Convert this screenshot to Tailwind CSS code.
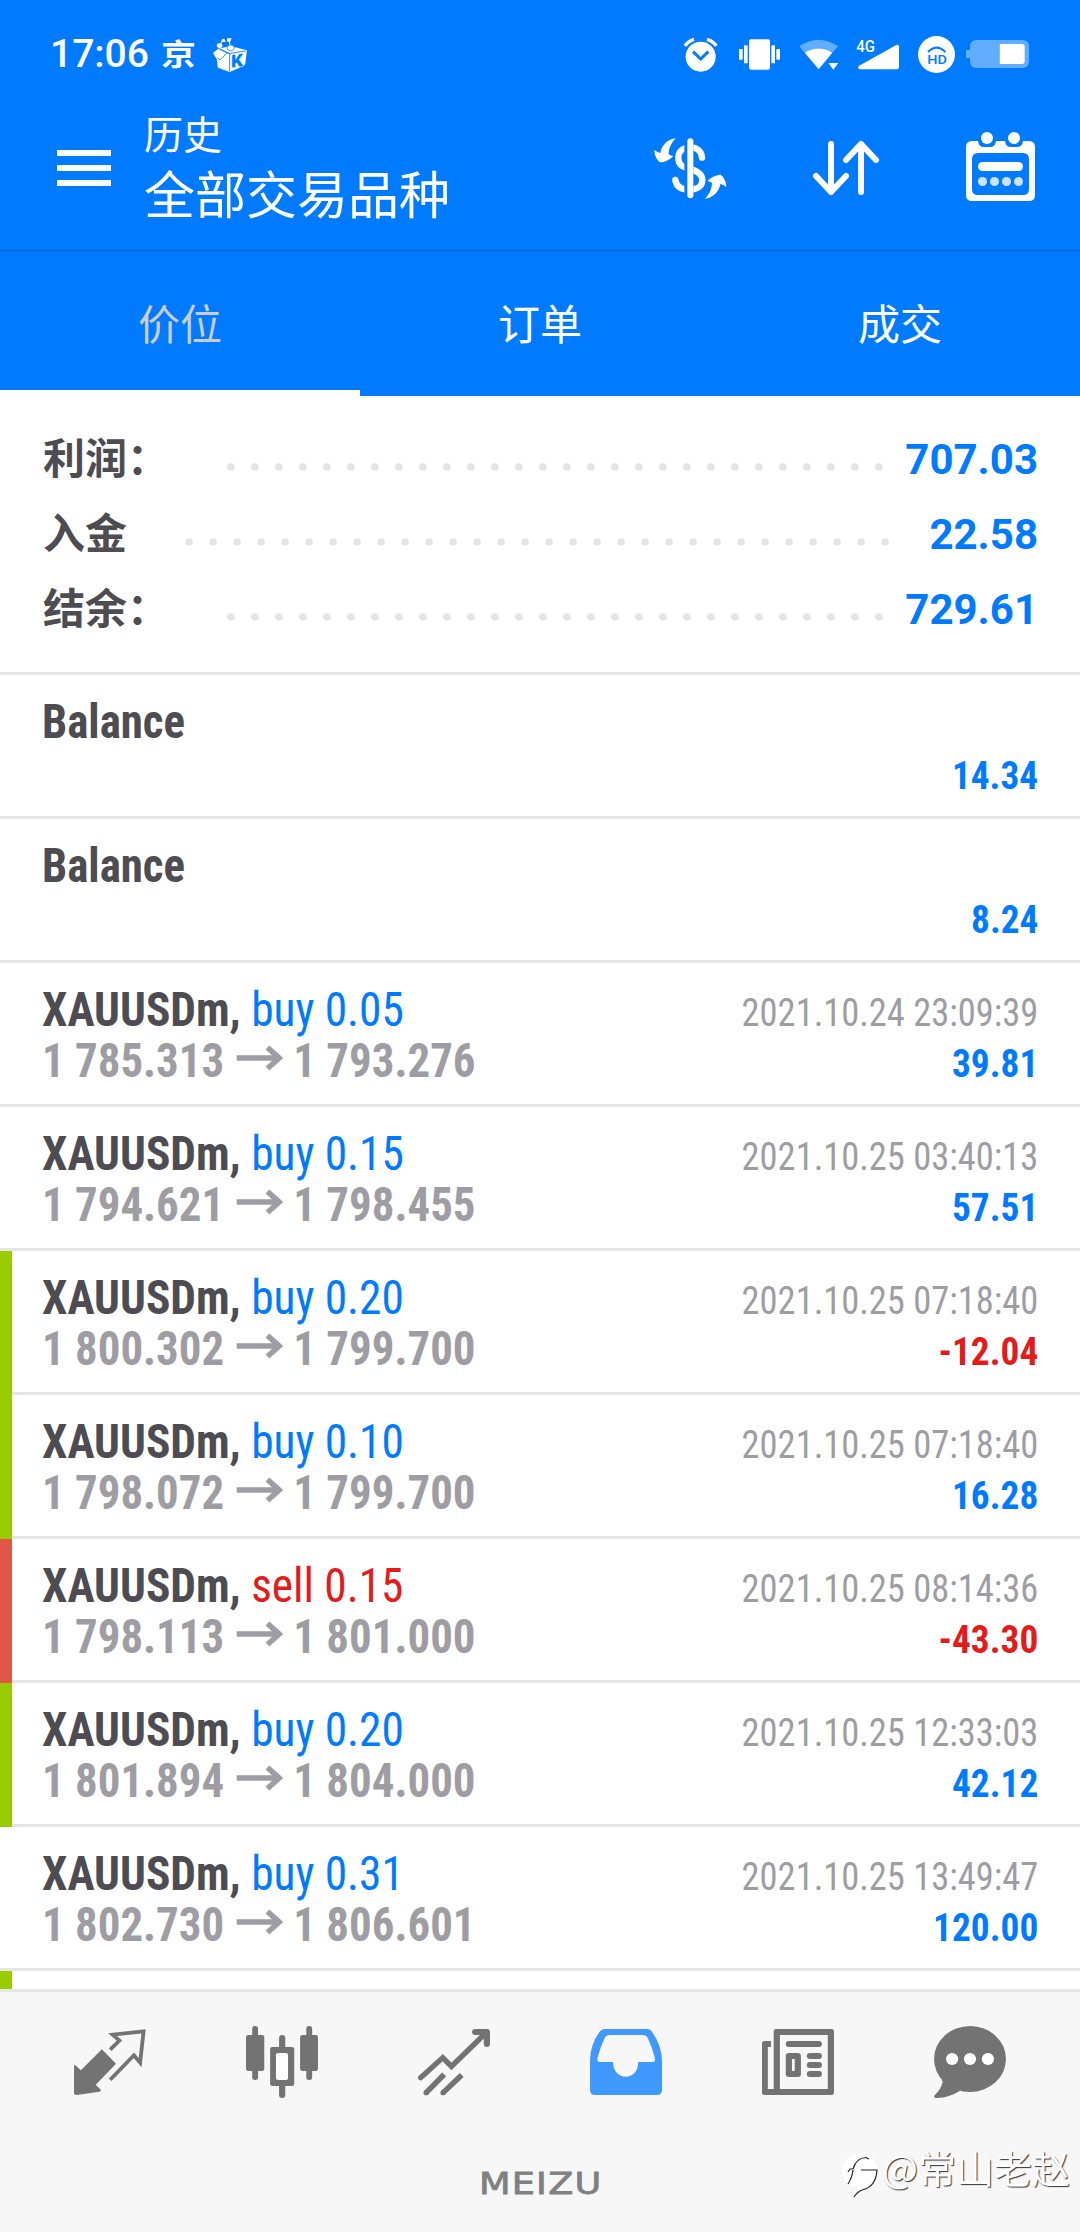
<!DOCTYPE html>
<html lang="zh-CN">
<head>
<meta charset="utf-8">
<title>历史</title>
<script src="https://cdn.jsdelivr.net/npm/@tailwindcss/browser@4"></script>
</head>
<body class="w-[1080px] h-[2232px] overflow-hidden bg-white font-['Roboto','Noto_Sans_CJK_SC',sans-serif] text-[#4d4c52]">
<div class="relative flex h-[2232px] w-[1080px] flex-col">

  <!-- Status bar -->
  <div class="flex h-[108px] shrink-0 items-center bg-[#007bff] pl-[50px] pr-[51px] text-white">
    <span class="w-[111px] pt-px text-[39px] font-medium leading-none">17:06</span>
    <span class="w-[52px] origin-center scale-y-[0.84] pt-[2px] text-[35px] font-bold leading-none">京</span>
    <svg class="h-[35px] w-[34px]" viewBox="616 108 98 106" preserveAspectRatio="none">
      <path fill="#fff" d="M616 156L634 142L668 136L714 148L709 190L705 196L664 214L630 201L627 176Z"/>
      <path fill="none" stroke="#007bff" stroke-width="2.500" d="M628 172L637 177L657 156L664 158V212M634 143L664 158L711 150M657 156L634 145"/>
      <path fill="none" stroke="#fff" stroke-width="3" d="M635 134L644 118L652 122M667 140L662 117L669 112"/>
      <ellipse cx="635" cy="134" rx="8" ry="7" fill="#fff"/><ellipse cx="667" cy="141" rx="10" ry="9" fill="#fff" stroke="#007bff" stroke-width="2"/><circle cx="646" cy="118" r="5" fill="#fff"/><circle cx="662" cy="117" r="6" fill="#fff"/>
      <text x="668" y="201" font-size="54" font-weight="900" fill="#007bff" transform="skewY(-8)" style="transform-origin:668px 201px">K</text>
    </svg>
    <div class="ml-auto flex items-center">
      <svg class="mr-[21px] h-[35px] w-[35px]" viewBox="249 109 105 105">
        <circle cx="302" cy="168" r="45" fill="#fff"/>
        <path d="M279 153L302 175L325 153" fill="none" stroke="#007bff" stroke-width="9"/>
        <path d="M255 136Q263 122 282 116M349 136Q341 122 321 116" fill="none" stroke="#fff" stroke-width="10"/>
      </svg>
      <svg class="mr-[19px] h-[31px] w-[41px]" viewBox="417 116 123 93" fill="#fff">
        <rect x="447" y="117" width="63" height="91" rx="6"/><rect x="432" y="135" width="11" height="54" rx="2"/><rect x="514" y="135" width="11" height="54" rx="2"/><rect x="417" y="146" width="11" height="32" rx="2"/><rect x="529" y="146" width="11" height="32" rx="2"/>
      </svg>
      <svg class="mr-[17px] h-[31px] w-[40px]" viewBox="596 117 120 93" fill="#fff">
        <path opacity=".38" d="M597 139Q655 99 713 139L696 158Q655 133 613 158Z"/><path d="M613 158Q655 133 696 158L655 208Z"/><path d="M684 189H714L699 209Z"/>
      </svg>
      <svg class="mr-[18px] h-[31px] w-[44px] overflow-visible" viewBox="767 109 132 93" fill="#fff">
        <path d="M775 190L888 127Q896 124 896 131V194Q896 200 890 200H776Q770 195 775 190Z"/><text x="768" y="147" font-size="50" font-weight="500" textLength="56" lengthAdjust="spacingAndGlyphs">4G</text>
      </svg>
      <svg class="mr-[11px] h-[37px] w-[37px]" viewBox="954 105 111 111">
        <circle cx="1009.500" cy="160.500" r="55.500" fill="#fff"/><path d="M984 153Q1010 127 1036 153" fill="none" stroke="#007bff" stroke-width="6"/><text x="982" y="189" font-size="38" font-weight="500" textLength="59" lengthAdjust="spacingAndGlyphs" fill="#007bff">HD</text>
      </svg>
      <svg class="h-[28px] w-[63px]" viewBox="1098 120 190 84" preserveAspectRatio="none" fill="#fff">
        <path opacity=".38" d="M1130 120H1268Q1288 120 1288 140V184Q1288 204 1268 204H1130Q1110 204 1110 184V174H1098V150H1110V140Q1110 120 1130 120Z"/><path d="M1200 132H1266Q1275 132 1275 141V183Q1275 192 1266 192H1200Z"/>
      </svg>
    </div>
  </div>

  <!-- App bar -->
  <div class="flex h-[144px] shrink-0 border-b-[3px] border-[#0070e8] bg-[#007bff] pl-[57px] text-white">
    <div class="mt-[42px] flex h-9 w-[54px] flex-col justify-between">
      <i class="h-[6px] bg-white"></i><i class="h-[6px] bg-white"></i><i class="h-[6px] bg-white"></i>
    </div>
    <div class="ml-[33px] flex flex-col whitespace-nowrap">
      <div class="mt-[2px] text-[39px] leading-[52px]">历史</div>
      <div class="text-[51px] leading-[70px]">全部交易品种</div>
    </div>
    <div class="mr-[45px] ml-auto flex">
      <svg class="mt-[30px] mr-[85px] h-[61px] w-[73px]" viewBox="161 413 219 183">
        <defs><clipPath id="sides"><path d="M200 420H252V590H200ZM279 420H330V590H279Z"/></clipPath></defs>
        <rect x="261" y="414" width="18" height="180" rx="9" fill="#fff"/>
        <path clip-path="url(#sides)" fill="none" stroke="#fff" stroke-width="19" stroke-linecap="round" d="M305 472C303 452 290 441 270 441C248 441 234 453 234 472C234 497 250 501 266 505C290 511 306 522 306 540C306 558 290 568 268 568C243 568 228 560 225 539"/>
        <path id="swoosh" fill="#fff" d="M226 414C203 416 184 434 180 458C174 457 168 453 162 449C162 465 170 480 179 486C190 486 208 479 219 467C213 467 209 464 205 461C205 443 214 427 226 414Z"/>
        <use href="#swoosh" transform="rotate(180 270 504.500)"/>
      </svg>
      <svg class="mt-[32px] mr-[86px] h-[56px] w-[68px]" viewBox="636 420 204 168" fill="none" stroke="#fff" stroke-width="18" stroke-linecap="round" stroke-linejoin="round">
        <path d="M693 432V576M648 528L693 576L738 528M783 576V432M738 480L783 432L828 480"/>
      </svg>
      <svg class="mt-[24px] h-[69px] w-[69px]" viewBox="1098 396 207 207">
        <path fill="#fff" fill-rule="evenodd" d="M1116 423H1134Q1136 441 1152 441H1170Q1186 441 1188 423H1215Q1217 441 1233 441H1251Q1267 441 1269 423H1287Q1305 423 1305 441V585Q1305 603 1287 603H1116Q1098 603 1098 585V441Q1098 423 1116 423ZM1134 459Q1116 459 1116 477V567Q1116 585 1134 585H1269Q1287 585 1287 567V477Q1287 459 1269 459Z"/>
        <g fill="#fff"><circle cx="1161" cy="414" r="18"/><circle cx="1242" cy="414" r="18"/><rect x="1134" y="486" width="135" height="27" rx="13.500"/><g opacity=".8"><circle cx="1147.500" cy="544.500" r="13.500"/><circle cx="1183.500" cy="544.500" r="13.500"/><circle cx="1219.500" cy="544.500" r="13.500"/><circle cx="1255.500" cy="544.500" r="13.500"/></g></g>
      </svg>
    </div>
  </div>

  <!-- Tabs -->
  <div class="grid h-[144px] shrink-0 grid-cols-3 bg-[#007bff] text-center text-[42px] leading-[134px] text-white">
    <div class="h-[144px] border-b-[6px] border-white pt-[7px] text-[#cccccc]">价位</div>
    <div class="pt-[7px]">订单</div>
    <div class="pt-[7px]">成交</div>
  </div>

  <!-- Summary -->
  <div id="summary" class="flex h-[279px] shrink-0 flex-col border-b-[3px] border-[#e5e5e5] pt-[26px] pr-[42px] pl-[43px] text-[42px] font-bold leading-[75px]"></div>

  <!-- History list -->
  <div id="list" class="h-[1314px] shrink-0 overflow-hidden"></div>

  <!-- Bottom navigation -->
  <div class="flex grow flex-col items-center border-t-[3px] border-[#e5e5e5] bg-[#f7f7f7] text-[#737373]">
    <div class="grid w-[1032px] grid-cols-6 justify-items-center pt-[34px]">
      <svg class="size-[72px]" viewBox="215 198 209 216" preserveAspectRatio="none" fill="currentColor">
        <path d="M296 268L337 311L278 374L294 391L289 395L222 405Q215 405 215 399V316H219L235 331Z"/>
        <path d="M320 269L347 242L327 224L417 214L407 308L389 286L320 359" fill="none" stroke="currentColor" stroke-width="11" stroke-miterlimit="10"/>
      </svg>
      <svg class="size-[72px]" viewBox="714 198 209 216" preserveAspectRatio="none" fill="currentColor">
        <rect x="714" y="225" width="53" height="108" rx="7"/><rect x="732" y="198" width="17" height="162" rx="8"/>
        <rect x="871" y="225" width="52" height="108" rx="7"/><rect x="889" y="198" width="17" height="162" rx="8"/>
        <rect x="810" y="225" width="18" height="189" rx="9"/><rect x="784" y="261" width="70" height="117" rx="7"/><rect x="801" y="279" width="35" height="81" rx="6" fill="#fff"/>
      </svg>
      <svg class="size-[72px]" viewBox="1214 198 209 216" preserveAspectRatio="none" fill="none" stroke="currentColor" stroke-width="16">
        <path stroke-linecap="round" d="M1222 353L1286 293L1311 319L1412 218"/><path stroke-width="18" stroke-linecap="round" stroke-linejoin="round" d="M1380 216H1414V252"/>
        <path d="M1238 398L1290 343M1287 398L1341 345"/><g fill="currentColor" stroke="none"><circle cx="1238" cy="398" r="8"/><circle cx="1287" cy="398" r="8"/></g>
      </svg>
      <svg class="size-[72px]" viewBox="145 198 209 216" preserveAspectRatio="none">
        <path fill="#4099ff" fill-rule="evenodd" d="M187 207H313Q320 207 325 215Q354 258 354 303V391Q354 405 339 405H160Q145 405 145 391V303Q145 255 173 215Q178 207 187 207ZM203 225Q191 225 187 235Q174 265 167 293Q164 306 173 306H212C212 332 227 350 249 350C271 350 285 332 285 306H326Q336 306 333 293Q325 262 313 235Q308 225 298 225Z"/>
      </svg>
      <svg class="size-[72px]" viewBox="645 198 209 216" preserveAspectRatio="none" fill="currentColor">
        <path fill-rule="evenodd" d="M686 207H847Q854 207 854 214V398Q854 405 847 405H652Q645 405 645 398V250Q645 243 652 243H671V261H662V387H679V214Q679 207 686 207ZM697 225V387H836V225Z"/>
        <rect x="714" y="243" width="105" height="18" rx="9"/><rect x="775" y="279" width="44" height="18" rx="9"/><rect x="775" y="306" width="44" height="18" rx="9"/><rect x="775" y="333" width="44" height="18" rx="9"/>
        <path fill-rule="evenodd" d="M723 279H749Q758 279 758 288V342Q758 351 749 351H723Q714 351 714 342V288Q714 279 723 279ZM732 297V333H740V297Z"/>
      </svg>
      <svg class="size-[72px]" viewBox="1144 198 209 216" preserveAspectRatio="none" fill="currentColor">
        <ellipse cx="1248.500" cy="297" rx="104.500" ry="99"/><path d="M1160 348Q1172 362 1168 370Q1164 388 1147 404Q1140 414 1152 414Q1190 412 1220 392Z"/>
        <g fill="#fff"><circle cx="1196.500" cy="297" r="17.700"/><circle cx="1248.500" cy="297" r="17.700"/><circle cx="1300.500" cy="297" r="17.700"/></g>
      </svg>
    </div>
    <div class="mt-[71px] origin-center scale-x-[1.22] pl-px font-['DejaVu_Sans',sans-serif] text-[30px] leading-[30px] tracking-[1px] text-[#808080] [-webkit-text-stroke:0.8px_#808080]">MEIZU</div>
  </div>

  <!-- Author watermark -->
  <div class="absolute top-[2150px] left-[842px] flex items-start whitespace-nowrap text-white">
    <svg class="mt-[3px] h-[45px] w-[38px]" viewBox="0 0 38 45" fill="none">
      <path d="M18 1C28 1 36 8 36 18C36 28 30 35 22 36L12 43Q15 38 16 34C7 34 0 27 0 18C0 8 8 1 18 1Z" fill="#fff"/>
      <path d="M6 19L8 16H11Q14 5 24 4.500L27 6M6 31Q10 25 11 17M19 17H35Q34 34 20 37Q15 39 12 44" stroke="#222" stroke-width="1.200"/>
    </svg>
    <span class="mt-[-8px] ml-[2px] font-['Noto_Sans_CJK_SC',sans-serif] text-[38px] leading-[50px] [text-shadow:1px_1px_1px_#333]">@常山老赵</span>
  </div>
</div>

<script>
const summary = [
  ['利润：', '707.03', 28],
  ['入金', '22.58', 30],
  ['结余：', '729.61', 28],
];
document.getElementById('summary').innerHTML = summary.map(([label, value, dots]) => `
  <div class="flex h-[75px] items-start">
    <span>${label}</span>
    <svg class="mt-[41px] ml-[57.500px] h-[8px]" style="width:${dots * 24 - 16}px"><line x1="4" y1="4" x2="${dots * 24 - 19}" y2="4" stroke="#e5e5e5" stroke-width="7.600" stroke-linecap="round" stroke-dasharray="0 24"/></svg>
    <span class="ml-auto text-[#007bff]">${value}</span>
  </div>`).join('');

const arrow = `<svg class="mt-[10px] h-[26px] w-[50px]" viewBox="0 0 46 26" preserveAspectRatio="none"><path d="M0 13H42M30.500 2.500L42 13L30.500 23.500" fill="none" stroke="#9d9da3" stroke-width="5.500"/></svg>`;
const deals = [
  ['', '', '', '', '', '14.34', ''],
  ['', '', '', '', '', '8.24', ''],
  ['buy', '0.05', '1 785.313', '1 793.276', '2021.10.24 23:09:39', '39.81', ''],
  ['buy', '0.15', '1 794.621', '1 798.455', '2021.10.25 03:40:13', '57.51', ''],
  ['buy', '0.20', '1 800.302', '1 799.700', '2021.10.25 07:18:40', '-12.04', 'tp'],
  ['buy', '0.10', '1 798.072', '1 799.700', '2021.10.25 07:18:40', '16.28', 'tp'],
  ['sell', '0.15', '1 798.113', '1 801.000', '2021.10.25 08:14:36', '-43.30', 'sl'],
  ['buy', '0.20', '1 801.894', '1 804.000', '2021.10.25 12:33:03', '42.12', 'tp'],
  ['buy', '0.31', '1 802.730', '1 806.601', '2021.10.25 13:49:47', '120.00', ''],
];
const bar = { tp: 'bg-[#99cc00]', sl: 'bg-[#e05747]', '': 'hidden' };
document.getElementById('list').innerHTML = deals.map(([side, lots, open, close, time, profit, mark]) => `
  <div class="flex h-[144px] font-stretch-condensed">
    <div class="w-[12px] shrink-0 ${bar[mark]}"></div>
    <div class="flex grow justify-between border-b-[3px] border-[#e5e5e5] pt-[21px] pr-[42px] ${mark ? 'pl-[30px]' : 'pl-[42px]'} leading-[51px] whitespace-nowrap">
      <div class="text-[48px]">
        ${side ? `<div class="h-[51px] origin-left scale-x-[0.945]"><b>XAUUSDm,</b> <span class="${side === 'buy' ? 'text-[#007bff]' : 'text-[#e41b1b]'}">${side} ${lots}</span></div>
        <div class="flex h-[51px] w-max origin-left scale-x-[0.935] font-bold text-[#9d9da3]"><span class="mr-[13px]">${open}</span>${arrow}<span class="ml-[11px]">${close}</span></div>`
        : '<div class="origin-left scale-x-[0.935] font-bold">Balance</div>'}
      </div>
      <div class="mt-[4px] text-right text-[39px]">
        <div class="h-[51px] origin-right scale-x-[0.935] text-[#9d9da3]">${time}</div>
        <div class="h-[51px] origin-right scale-x-[0.957] font-bold ${profit[0] === '-' ? 'text-[#e41b1b]' : 'text-[#007bff]'}">${profit}</div>
      </div>
    </div>
  </div>`).join('') + '<div class="h-[18px] w-[12px] bg-[#99cc00]"></div>';
</script>
</body>
</html>
